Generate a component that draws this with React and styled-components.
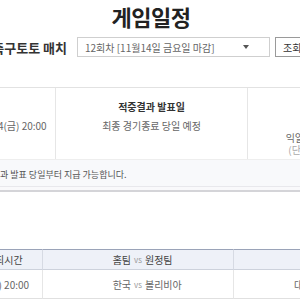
import React from "react";
import styled, { createGlobalStyle } from "styled-components";

const GlobalStyle = createGlobalStyle`
  html, body { margin: 0; padding: 0; background: #fff; }
  body {
    overflow: hidden;
    font-family: "Noto Sans CJK KR", "Noto Sans", sans-serif;
    color: #333;
  }
`;

const Page = styled.div`
  width: 576px;
  margin-left: -137px;
`;

const Title = styled.h2`
  margin: 0;
  padding-top: 5px;
  font-size: 22px;
  line-height: 22px;
  font-weight: 700;
  text-align: center;
  color: #222;
  letter-spacing: -0.5px;
`;

const SearchRow = styled.div`
  display: grid;
  grid-template-columns: 214px 193px auto;
  align-items: center;
  margin-top: 10px;
  height: 20px;
`;

const Label = styled.span`
  font-size: 13px;
  font-weight: 700;
  color: #333;
  padding-right: 10px;
  text-align: right;
  white-space: nowrap;
`;

const Select = styled.div`
  box-sizing: border-box;
  height: 20px;
  border: 1px solid #cfcfcf;
  display: flex;
  align-items: center;
  justify-content: space-between;
  padding: 0 20px 0 7px;
  font-size: 10px;
  color: #666;
  white-space: nowrap;
`;

const Caret = styled.span`
  width: 0;
  height: 0;
  border-left: 3px solid transparent;
  border-right: 3px solid transparent;
  border-top: 4px solid #555;
`;

const Button = styled.button`
  justify-self: start;
  box-sizing: border-box;
  height: 20px;
  margin-left: 5px;
  padding: 0 14px 0 7px;
  border: 1px solid #9a9a9a;
  background: #fff;
  font-family: inherit;
  font-size: 10px;
  color: #333;
`;

const InfoTable = styled.div`
  margin-top: 30px;
  border-top: 1px solid #e2e2e2;
  display: grid;
  grid-template-columns: 192px 192px 192px;
`;

const InfoCell = styled.div`
  height: 71px;
  box-sizing: border-box;
  padding-top: 13px;
  padding-left: ${(p) => (p.$first ? "4px" : "0")};
  text-align: center;
  border-left: ${(p) => (p.$first ? "none" : "1px solid #e6e6e6")};
  display: flex;
  flex-direction: column;
  align-items: center;
`;

const InfoHead = styled.div`
  font-size: 10px;
  line-height: 12px;
  font-weight: 700;
  color: #333;
  margin-bottom: 7px;
  white-space: nowrap;
`;

const InfoText = styled.div`
  font-size: 10px;
  line-height: 12px;
  color: ${(p) => (p.$muted ? "#aaa" : "#666")};
  white-space: nowrap;
`;

const Notice = styled.div`
  background: #f8f9fb;
  border-top: 1px solid #eeeeee;
  border-bottom: 1px solid #e8e8ec;
  padding: 9px 0 5px 66px;
  font-size: 9px;
  line-height: 12px;
  color: #555;
  white-space: nowrap;
`;

const NoticeEdge = styled.div`
  height: 3px;
  background: #f9f9fb;
  border-bottom: 2px solid #d4d4d8;
`;

const MatchTable = styled.div`
  margin-top: 57px;
  display: grid;
  grid-template-columns: 84px 95px 191px 206px;
`;

const HeadCell = styled.div`
  height: 21px;
  box-sizing: border-box;
  background: #eef1f8;
  border-top: 1px solid #9aa3b8;
  border-bottom: 1px solid #cdd2dc;
  border-left: ${(p) => (p.$first ? "none" : "1px solid #d6dae3")};
  display: flex;
  align-items: center;
  justify-content: center;
  font-size: 10px;
  color: #444;
  white-space: nowrap;
`;

const BodyCell = styled.div`
  height: 29px;
  box-sizing: border-box;
  border-bottom: 1px solid #e0e0e0;
  border-left: ${(p) => (p.$first ? "none" : "1px solid #e6e6e6")};
  display: flex;
  align-items: center;
  justify-content: ${(p) => (p.$left ? "flex-start" : "center")};
  padding-left: ${(p) => (p.$left ? "60px" : "0")};
  font-size: 10px;
  color: #666;
  white-space: nowrap;
`;

const Versus = styled.div`
  display: grid;
  grid-template-columns: 1fr auto 1fr;
  align-items: center;
  width: 100%;
  column-gap: 3px;
`;

const Home = styled.span`
  text-align: right;
`;
const Away = styled.span`
  text-align: left;
`;
const Vs = styled.span`
  font-size: 8px;
  color: #999;
`;

export default function App() {
  return (
    <>
      <GlobalStyle />
      <Page>
        <Title>게임일정</Title>
        <SearchRow>
          <Label>축구토토 매치</Label>
          <Select>
            <span>12회차 [11월14일 금요일 마감]</span>
            <Caret />
          </Select>
          <Button>조회</Button>
        </SearchRow>

        <InfoTable>
          <InfoCell $first>
            <InfoHead>발매기간</InfoHead>
            <InfoText>2025.11.10(월) 10:00 ~ 11.14(금) 20:00</InfoText>
          </InfoCell>
          <InfoCell>
            <InfoHead>적중결과 발표일</InfoHead>
            <InfoText>최종 경기종료 당일 예정</InfoText>
          </InfoCell>
          <InfoCell>
            <InfoHead>적중금 지급기간</InfoHead>
            <InfoText>발표 당일부터</InfoText>
            <InfoText>익일부터 1년 이내 지급 가능</InfoText>
            <InfoText $muted>(단, 휴일 및 공휴일은 제외)</InfoText>
          </InfoCell>
        </InfoTable>
        <Notice>※ 적중금은 적중결과 발표 당일부터 지급 가능합니다.</Notice>
        <NoticeEdge />

        <MatchTable>
          <HeadCell $first>경기</HeadCell>
          <HeadCell>경기개최시간</HeadCell>
          <HeadCell>
            <Versus>
              <Home>홈팀</Home>
              <Vs>vs</Vs>
              <Away>원정팀</Away>
            </Versus>
          </HeadCell>
          <HeadCell>경기장</HeadCell>

          <BodyCell $first>1</BodyCell>
          <BodyCell>11.14(금) 20:00</BodyCell>
          <BodyCell>
            <Versus>
              <Home>한국</Home>
              <Vs>vs</Vs>
              <Away>볼리비아</Away>
            </Versus>
          </BodyCell>
          <BodyCell $left>대전월드컵경기장</BodyCell>
        </MatchTable>
      </Page>
    </>
  );
}
